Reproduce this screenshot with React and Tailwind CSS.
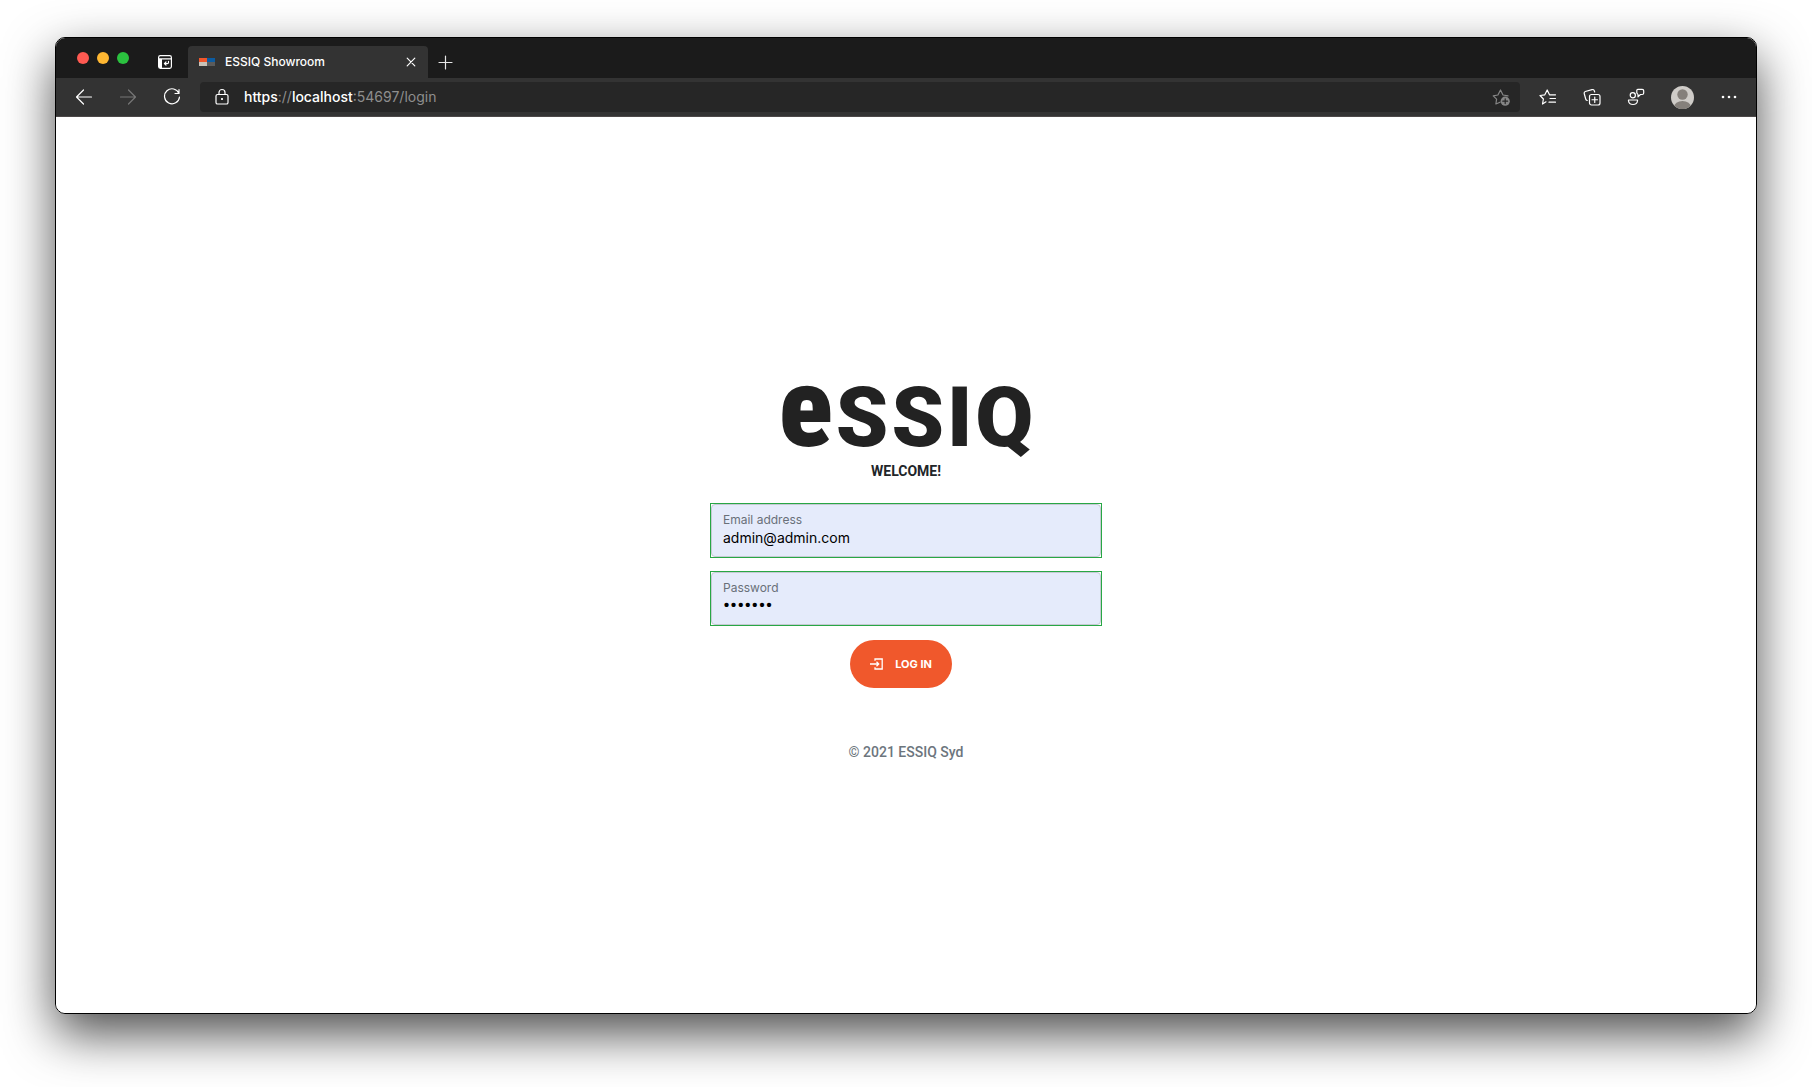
import { useState } from "react";

function Stroke({ size = 18, className = "", children }) {
  return (
    <svg
      width={size}
      height={size}
      viewBox={`0 0 ${size} ${size}`}
      fill="none"
      stroke="currentColor"
      strokeWidth="1.2"
      strokeLinecap="round"
      strokeLinejoin="round"
      className={className}
      aria-hidden="true"
    >
      {children}
    </svg>
  );
}

function TabBar() {
  return (
    <div className="flex h-10 bg-[#1b1b1b]">
      <div className="flex h-10 items-center gap-2 pl-[21px]">
        <button aria-label="Close window" className="size-3 rounded-full bg-[#ff5a52]" />
        <button aria-label="Minimize window" className="size-3 rounded-full bg-[#ffb732]" />
        <button aria-label="Zoom window" className="size-3 rounded-full bg-[#2bc23f]" />
      </div>
      <button aria-label="Tab actions" className="ml-7 mt-4 h-4 w-4 text-white">
        <Stroke size={16}>
          <rect x="1.6" y="1.6" width="12.8" height="12.8" rx="1.8" />
          <path d="M1.6 4.8H14.4" />
          <path d="M2 5H5V14H2Z" fill="currentColor" stroke="none" />
          <path d="M11.5 7.3V8.4Q11.5 9.6 10.3 9.6H7.5M9 8L7.4 9.6L9 11.2" />
        </Stroke>
      </button>
      <div className="ml-[15px] mt-2 flex h-8 w-60 items-center rounded-t bg-[#333333] pl-[11px] pr-2.5">
        <svg width="16" height="8" viewBox="0 0 16 8" aria-hidden="true">
          <rect width="8" height="4" fill="#f0562b" />
          <rect x="8" width="8" height="4" fill="#0c5ba0" />
          <rect y="4" width="8" height="4" fill="#c8c2b8" />
          <rect x="8" y="4" width="8" height="4" fill="#5b5b5b" />
        </svg>
        <span className="ml-2.5 flex-1 text-xs font-medium text-white">ESSIQ Showroom</span>
        <button aria-label="Close tab" className="text-white">
          <Stroke size={14}>
            <path d="M3.2 3.2L10.8 10.8M10.8 3.2L3.2 10.8" />
          </Stroke>
        </button>
      </div>
      <button aria-label="New tab" className="ml-2.5 mt-4 h-4 text-[#e6e6e6]">
        <Stroke size={15}>
          <path d="M7.5 1V14M1 7.5H14" />
        </Stroke>
      </button>
    </div>
  );
}

function Toolbar() {
  return (
    <div className="flex h-[39px] items-center border-b border-[#4c4848] bg-[#333333] pl-[19px] pr-[18px] text-white">
      <div className="flex items-center gap-[26px]">
        <button aria-label="Back">
          <Stroke>
            <path d="M16.5 9H1.5M8.5 2L1.5 9L8.5 16" />
          </Stroke>
        </button>
        <button aria-label="Forward" className="text-[#777777]">
          <Stroke>
            <path d="M1.5 9H16.5M9.5 2L16.5 9L9.5 16" />
          </Stroke>
        </button>
        <button aria-label="Refresh">
          <Stroke>
            <path d="M16 5.5A7.5 7.5 0 1 0 16.5 9M16 1.5V5.5H12" />
          </Stroke>
        </button>
      </div>
      <div className="ml-[19px] flex h-[30px] flex-1 items-center rounded bg-[#262626] pl-[13px] pr-2.5">
        <Stroke>
          <rect x="3" y="6.5" width="12" height="9.5" rx="1.6" />
          <path d="M6 6.5V4.5A3 3 0 0 1 12 4.5V6.5" />
          <circle cx="9" cy="11" r="0.5" fill="currentColor" />
        </Stroke>
        <span className="ml-[13px] flex-1 text-sm font-medium text-white">
          https<span className="font-normal text-[#8e8e8e]">://</span>localhost
          <span className="font-normal text-[#8e8e8e]">:54697/login</span>
        </span>
        <button aria-label="Add this page to favorites" className="text-[#858585]">
          <Stroke>
            <path d="M8 14.2L3.9 16L4.6 11.2L1.2 7.8L5.9 7L8.5 2L11 7L16 7.8" />
            <circle cx="13.2" cy="13.2" r="4.6" fill="currentColor" stroke="none" />
            <path d="M13.2 10.8V15.6M10.8 13.2H15.6" stroke="#262626" />
          </Stroke>
        </button>
      </div>
      <div className="ml-[19px] flex items-center gap-[26px]">
        <button aria-label="Favorites">
          <Stroke>
            <path d="M7 13.8L3.5 16L4.4 11L1 7.5L5.8 6.8L8.2 2L10.5 6.8H16.5M11 10.5H16.5M10 14.2H16.5" />
          </Stroke>
        </button>
        <button aria-label="Collections">
          <Stroke>
            <path d="M4.2 12.5Q3 12.2 2.7 11L1.2 5.5Q0.9 4 2.3 3.5L9 1.6Q10.6 1.2 11.2 2.6L11.7 4" />
            <rect x="6.5" y="6.5" width="10.5" height="10.5" rx="2" />
            <path d="M11.75 9V14.5M9 11.75H14.5" />
          </Stroke>
        </button>
        <button aria-label="Feedback">
          <Stroke>
            <circle cx="5.8" cy="7.3" r="2.6" />
            <path d="M1.5 12H10.5V13Q10 16.5 6 16.5Q2 16.5 1.5 13Z" />
            <path d="M10.8 1.3H15.2Q16.7 1.3 16.7 2.8V5Q16.7 6.5 15.2 6.5H13.5L11 8.8V6.5L9.8 5V2.5Q9.8 1.3 10.8 1.3Z" />
          </Stroke>
        </button>
        <button aria-label="Profile">
          <svg width="23" height="23" viewBox="0 0 23 23" aria-hidden="true">
            <clipPath id="avatar">
              <circle cx="11.5" cy="11.5" r="11.5" />
            </clipPath>
            <g clipPath="url(#avatar)">
              <rect width="23" height="23" fill="#cfccc8" />
              <circle cx="11.5" cy="8.5" r="5.2" fill="#85807b" />
              <ellipse cx="11.5" cy="21" rx="8.5" ry="6" fill="#85807b" />
            </g>
          </svg>
        </button>
        <button aria-label="Settings and more">
          <Stroke>
            <g fill="currentColor" stroke="none">
              <circle cx="3" cy="9" r="1.3" />
              <circle cx="9" cy="9" r="1.3" />
              <circle cx="15" cy="9" r="1.3" />
            </g>
          </Stroke>
        </button>
      </div>
    </div>
  );
}

function Field({ id, label, type, value, onChange, inputClass }) {
  return (
    <div className="w-full border border-[#28a745]">
      <div className="flex flex-col rounded border border-[#c5cad3] bg-[#e5ebfb] px-[11px] pb-[9px] pt-[7px]">
        <label htmlFor={id} className="text-xs leading-4 text-[#697079]">
          {label}
        </label>
        <input
          id={id}
          type={type}
          value={value}
          onChange={onChange}
          className={`h-[19px] w-full bg-transparent text-black outline-none ${inputClass}`}
        />
      </div>
    </div>
  );
}

function Login() {
  const [email, setEmail] = useState("admin@admin.com");
  const [password, setPassword] = useState("admin12");

  return (
    <main className="flex flex-1 flex-col items-center justify-center rounded-b-[9px] bg-white pt-0.5">
      <form
        className="flex w-[392px] max-w-full flex-col items-center"
        onSubmit={(e) => e.preventDefault()}
      >
        <div
          aria-label="ESSIQ"
          className="flex h-[76px] items-baseline gap-[3px] font-[Roboto,sans-serif] text-[84px] leading-[76px] font-black text-[#222222]"
        >
          <span className="font-['Roboto_Condensed',Roboto,sans-serif] text-[112px]">e</span>
          <span>S</span>
          <span>S</span>
          <span>I</span>
          <span>Q</span>
        </div>
        <h1 className="mt-[15px] font-[Roboto,sans-serif] text-sm font-bold text-[#212529]">WELCOME!</h1>
        <div className="mt-[22px] flex w-full flex-col gap-[13px]">
          <Field
            id="email"
            label="Email address"
            type="email"
            value={email}
            onChange={(e) => setEmail(e.target.value)}
            inputClass="text-sm"
          />
          <Field
            id="password"
            label="Password"
            type="password"
            value={password}
            onChange={(e) => setPassword(e.target.value)}
            inputClass="font-[Roboto,sans-serif] text-[21px]"
          />
        </div>
        <button
          type="submit"
          className="mr-2.5 mt-3.5 flex h-12 items-center gap-3 rounded-full bg-[#f0582c] px-5 text-[11px] font-bold text-white"
        >
          <svg width="13" height="12" viewBox="0 0 13 12" fill="none" stroke="currentColor" strokeWidth="1.3" aria-hidden="true">
            <path d="M5 2.8V1H12.2V11H5V9.2M0 6H8.5M6.5 3.8L8.7 6L6.5 8.2" />
          </svg>
          LOG IN
        </button>
        <p className="mt-[54px] font-[Roboto,sans-serif] text-sm font-medium text-[#6c757d]">© 2021 ESSIQ Syd</p>
      </form>
    </main>
  );
}

export default function App() {
  return (
    <div className="flex min-h-screen flex-col bg-white px-[55px] pb-[73px] pt-[37px] font-[Inter,sans-serif]">
      <div className="flex flex-1 flex-col overflow-hidden rounded-[10px] border border-black shadow-[0_20px_50px_rgba(0,0,0,0.7)]">
        <TabBar />
        <Toolbar />
        <Login />
      </div>
    </div>
  );
}
